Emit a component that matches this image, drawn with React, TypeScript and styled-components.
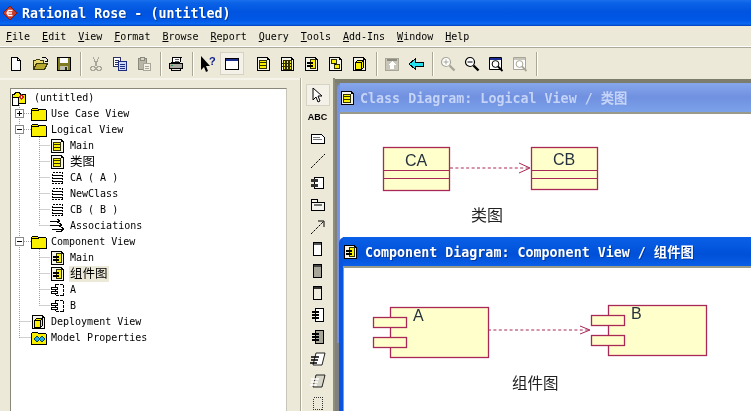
import React from "react"
import styled, { createGlobalStyle } from "styled-components"

const GlobalStyle = createGlobalStyle`
  html, body {
    margin: 0;
    padding: 0;
    background: #ece9d8;
    overflow: hidden;
  }
`

const MONO = `"DejaVu Sans Mono", "Noto Sans CJK SC", monospace`

const Frame = styled.div`
  width: 751px;
  height: 411px;
  overflow: hidden;
  display: flex;
  flex-direction: column;
  background: #ece9d8;
  font-family: ${MONO};
  color: #000;
  filter: blur(0.35px);
`

const TitleBar = styled.div`
  height: 26px;
  flex: none;
  display: flex;
  align-items: center;
  gap: 4px;
  padding-left: 2px;
  background: linear-gradient(#1a70ee 0, #0a62e6 3px, #0054e0 12px, #0058e6 20px, #0a68f2 24px, #0040b8 26px);
  color: #fff;
  font-weight: bold;
  font-size: 13.33px;
  white-space: pre;
  text-shadow: 1px 1px 0 #003c9c;
`

const MenuBar = styled.div`
  height: 20px;
  flex: none;
  display: flex;
  align-items: center;
  font-size: 10px;
  border-bottom: 1px solid #fff;
  box-shadow: 0 1px 0 #aca899;
`

const MenuItem = styled.div`
  padding: 0 6px;
  white-space: pre;
`

const ToolBar = styled.div`
  height: 30px;
  flex: none;
  display: flex;
  align-items: center;
  padding: 1px 0 0 4px;
  box-sizing: border-box;
  margin-top: 1px;
`

const ToolButton = styled.div<{ $active?: boolean }>`
  width: 24px;
  height: 23px;
  flex: none;
  display: flex;
  align-items: center;
  justify-content: center;
  box-sizing: border-box;
  ${(p) => (p.$active ? "background: #f4f2e8; border: 1px solid #d6d3c4;" : "")}
`

const ToolSeparator = styled.div<{ $blank?: boolean }>`
  width: 8px;
  height: 24px;
  flex: none;
  display: flex;
  justify-content: center;
  &::after {
    content: "";
    width: 1px;
    background: ${(p) => (p.$blank ? "transparent" : "#aca899")};
    box-shadow: ${(p) => (p.$blank ? "none" : "1px 0 0 #fff")};
  }
`

const Workspace = styled.div`
  flex: 1;
  min-height: 0;
  display: flex;
`

const TreeDock = styled.div`
  width: 301px;
  flex: none;
  box-sizing: border-box;
  padding: 10px 13px 0 10px;
  border-right: 1px solid #aca899;
  box-shadow: inset 0 2px 0 #f6f4ea;
`

const TreePanel = styled.div`
  position: relative;
  height: 100%;
  box-sizing: border-box;
  background: #fff;
  border-top: 1px solid #8a8878;
  border-left: 1px solid #8a8878;
  border-right: 1px solid #c8c6b8;
  padding-top: 1px;
`

const TreeGuides = styled.svg`
  position: absolute;
  left: -11px;
  top: -12px;
`

const TreeRow = styled.div<{ $level: number }>`
  position: relative;
  height: 16px;
  display: flex;
  align-items: center;
  padding-left: ${(p) => [0, 20, 39][p.$level]}px;
  font-size: 10px;
  white-space: pre;
`

const TreeIcon = styled.span<{ $gap: number }>`
  width: 16px;
  height: 16px;
  flex: none;
  display: flex;
  margin-right: ${(p) => p.$gap}px;
`

const TreeLabel = styled.span<{ $selected?: boolean; $cjk?: boolean }>`
  padding: 0 1px;
  line-height: 16px;
  font-size: ${(p) => (p.$cjk ? "12.5px" : "10px")};
  background: ${(p) => (p.$selected ? "#ece9d8" : "transparent")};
`

const Expander = styled.span`
  position: absolute;
  left: 4px;
  top: 3px;
  width: 9px;
  height: 9px;
  box-sizing: border-box;
  border: 1px solid #8a8a8a;
  background: #fff;
  display: flex;
  align-items: center;
  justify-content: center;
`

const SideToolBar = styled.div`
  width: 34px;
  flex: none;
  display: flex;
  flex-direction: column;
  align-items: center;
  padding-top: 6px;
  box-sizing: border-box;
  border-left: 1px solid #fff;
  border-right: 2px solid #8f8d7c;
`

const SideButton = styled.div<{ $active?: boolean }>`
  width: 24px;
  height: 22px;
  flex: none;
  display: flex;
  align-items: center;
  justify-content: center;
  box-sizing: border-box;
  font-size: 9px;
  font-weight: bold;
  font-family: "Liberation Sans", sans-serif;
  ${(p) => (p.$active ? "background: #f4f2e8; border: 1px solid #d6d3c4;" : "")}
`

const MdiArea = styled.div`
  flex: 1;
  position: relative;
  background: linear-gradient(#ece9d8 0, #ece9d8 1px, #7d7d6e 1px, #7d7d6e 5px, #808080 5px);
  overflow: hidden;
`

const DocWindow = styled.div<{ $active?: boolean; $left: number; $top: number; $height: number }>`
  position: absolute;
  left: ${(p) => p.$left}px;
  top: ${(p) => p.$top}px;
  width: 460px;
  height: ${(p) => p.$height}px;
  display: flex;
  flex-direction: column;
  box-sizing: border-box;
  padding: 0 ${(p) => (p.$active ? 4 : 2)}px 0;
  border-radius: 6px 6px 0 0;
  background: ${(p) => (p.$active ? "#0a55e0" : "#7394e4")};
`

const DocTitle = styled.div<{ $active?: boolean }>`
  height: 29px;
  flex: none;
  display: flex;
  align-items: center;
  gap: ${(p) => (p.$active ? 6 : 4)}px;
  margin-left: ${(p) => (p.$active ? 0 : 1)}px;
  font-size: 13.33px;
  font-weight: bold;
  white-space: pre;
  color: ${(p) => (p.$active ? "#fff" : "#c4d3f6")};
  ${(p) =>
    p.$active
      ? "text-shadow: 1px 1px 0 #0038a0; background: linear-gradient(#0a60e8, #0050d8 60%, #0a5ee8);"
      : "background: linear-gradient(#86a6ec, #7090e0 50%, #7ca2ea);"}
`

const DocClient = styled.div`
  flex: 1;
  background: #fff;
  border-top: 2px solid #9a9a8a;
  border-left: 1px solid #9a9a8a;
`

const DiagramSvg = styled.svg`
  display: block;
`

const DiagramText = styled.text<{ $size: number; $dark?: boolean }>`
  font-family: "Liberation Sans", "Noto Sans CJK SC", sans-serif;
  font-size: ${(p) => p.$size}px;
  fill: ${(p) => (p.$dark ? "#222" : "#26323e")};
`

type IconProps = { gray?: boolean }

const Svg: React.FC<{ children: React.ReactNode; size?: number }> = ({ children, size = 16 }) => (
  <svg width={size} height={size} viewBox="0 0 16 16" fill="none" shapeRendering="crispEdges">
    {children}
  </svg>
)

const NewIcon = () => (
  <Svg>
    <path d="M3.5 1.5h6l3 3v10h-9z" fill="#fff" stroke="#000" />
    <path d="M9.5 1.5v3h3" stroke="#000" />
  </Svg>
)
const OpenIcon = () => (
  <Svg>
    <path d="M1.5 13.5v-9h2l1-1h3l1 1h3v2" fill="#e8d870" stroke="#3a3a10" />
    <path d="M1.5 13.5l3-6h11l-3 6z" fill="#b8a830" stroke="#3a3a10" />
    <path d="M10 1.5l3-.5 2 2M15 3v2h-2" stroke="#000" />
  </Svg>
)
const SaveIcon = () => (
  <Svg>
    <path d="M1.5 1.5h13v13h-13z" fill="#807a20" stroke="#000" />
    <path d="M4 2h8v5H4z" fill="#fff" />
    <path d="M4 10h8v4H4z" fill="#c0c0b0" />
    <path d="M9 11h2v3H9z" fill="#303020" />
  </Svg>
)
const CutIcon = () => (
  <Svg>
    <path d="M5 1l4 9M11 1L7 10" stroke="#a8a698" />
    <circle cx="5" cy="12.5" r="2.2" stroke="#a8a698" />
    <circle cx="11" cy="12.5" r="2.2" stroke="#a8a698" />
  </Svg>
)
const CopyIcon = () => (
  <Svg>
    <path d="M1.5 1.5h7v9h-7z" fill="#fff" stroke="#303060" />
    <path d="M3 4h4M3 6h4M3 8h3" stroke="#303060" />
    <path d="M6.5 5.5h8v9h-8z" fill="#d0d8f8" stroke="#1c2c80" />
    <path d="M8 8h5M8 10h5M8 12h5" stroke="#1c2c80" />
  </Svg>
)
const PasteIcon = () => (
  <Svg>
    <path d="M2.5 2.5h8v11h-8z" fill="#b8b6a6" stroke="#8c8a7c" />
    <path d="M4.5 1.5h4v3h-4z" fill="#d8d6c8" stroke="#8c8a7c" />
    <path d="M7.5 7.5h7v7h-7z" fill="#f4f2e8" stroke="#a8a698" />
    <path d="M9 10h4M9 12h4" stroke="#a8a698" />
  </Svg>
)
const PrintIcon = () => (
  <Svg>
    <path d="M5 1.5h8l-1 5H4z" fill="#fff" stroke="#000" />
    <path d="M1.5 7.5h13v5h-13z" fill="#a8a8a0" stroke="#000" />
    <path d="M3.5 12.5h9v2h-9z" fill="#e8e8e0" stroke="#000" />
    <path d="M3 9h2" stroke="#20a040" />
    <path d="M7 5h4M7 3h4" stroke="#606060" />
  </Svg>
)
const HelpIcon = () => (
  <svg width="16" height="16" viewBox="0 0 16 16">
    <path d="M1 0v14l3-3 2 5 2-1-2-5h4z" fill="#000" />
    <text x="9" y="9" fontSize="11" fontWeight="bold" fontFamily="Liberation Sans, sans-serif" fill="#0c1c90">?</text>
  </svg>
)
const BrowseIcon = () => (
  <Svg>
    <path d="M1.5 2.5h13v11h-13z" fill="#fff" stroke="#000" />
    <path d="M2 3h12v2H2z" fill="#1c2c90" />
  </Svg>
)
const DiagramPage: React.FC<{ children: React.ReactNode }> = ({ children }) => (
  <Svg>
    <path d="M1.5 1.5h10l2 2v11h-12z" fill="#f4f4ea" stroke="#000" />
    <path d="M11.5 1.5v2h2" stroke="#000" />
    {children}
  </Svg>
)
const ClassDiagramIcon = () => (
  <DiagramPage>
    <path d="M4 4h6v9H4z" fill="#f8f000" />
    <path d="M4 6.5h6M4 9.5h6M4 4.5h6M4 12.5h6" stroke="#303000" />
    <path d="M3.5 4v9M10.5 4v9" stroke="#303000" />
  </DiagramPage>
)
const UseCaseDiagramIcon = () => (
  <DiagramPage>
    <path d="M3 4h2v9H3zM6 4h2v9H6zM9 4h2v9H9z" fill="#f8f000" stroke="#303000" />
    <path d="M2 7h10M2 10h10" stroke="#303000" />
  </DiagramPage>
)
const ComponentDiagramIcon = () => (
  <DiagramPage>
    <path d="M6 3.5h5v9H6z" fill="#f8f000" stroke="#303000" />
    <path d="M3 6h5v1.6H3zM3 9h5v1.6H3z" fill="#f8f000" stroke="#000" />
  </DiagramPage>
)
const DeploymentDiagramIcon = () => (
  <DiagramPage>
    <path d="M3.5 6.5l2-2h6v7l-2 2h-6z" fill="#f8f000" stroke="#000" />
    <path d="M3.5 6.5h6v7M9.5 6.5l2-2" stroke="#000" />
  </DiagramPage>
)
const StateDiagramIcon = () => (
  <DiagramPage>
    <path d="M3 3.5h5v4H3z" fill="#f8f000" stroke="#303000" />
    <path d="M6.5 8.5h5v4h-5z" fill="#f8f000" stroke="#303000" />
    <path d="M6 7.5l2 1" stroke="#000" />
  </DiagramPage>
)
const UpIcon: React.FC<IconProps> = () => (
  <Svg>
    <path d="M1.5 2.5h13v12h-13z" fill="#c8c6b8" stroke="#a8a698" />
    <path d="M3 4h10" stroke="#8c8a7c" strokeWidth="2" />
    <path d="M8 5l4 4h-2v4H6V9H4z" fill="#fff" />
  </Svg>
)
const BackIcon = () => (
  <Svg>
    <path d="M1 8l6-5v3h8v4H7v3z" fill="#22e0f0" stroke="#000" />
  </Svg>
)
const ZoomIcon: React.FC<{ plus?: boolean; gray?: boolean }> = ({ plus, gray }) => {
  const c = gray ? "#a8a698" : "#000"
  return (
    <svg width="16" height="16" viewBox="0 0 16 16" fill="none">
      <circle cx="6" cy="6" r="4.5" fill="#fff" stroke={c} strokeWidth="1.2" />
      <path d="M3.5 6h5" stroke={c} />
      {plus && <path d="M6 3.5v5" stroke={c} />}
      <path d="M9.5 9.5l5 5" stroke={c} strokeWidth="2.4" />
    </svg>
  )
}
const FitIcon: React.FC<IconProps> = ({ gray }) => {
  const c = gray ? "#a8a698" : "#000"
  return (
    <svg width="16" height="16" viewBox="0 0 16 16" fill="none">
      <path d="M1.5 1.5h12v12h-12z" fill="#fff" stroke={c} />
      <path d="M2 2h11v2H2z" fill={gray ? "#c8c6b8" : "#1c2c90"} />
      <circle cx="7.5" cy="8" r="3.4" stroke={c} />
      <path d="M10 10.5l4.5 4.5" stroke={c} strokeWidth="1.8" />
    </svg>
  )
}

const RootIcon = () => (
  <Svg>
    <path d="M3.5 4.5l1-2h4l1 2h5v9h-13v-9z" fill="#f8f000" stroke="#000" />
    <path d="M1 7h6v8H1z" fill="#fff" stroke="#000" />
    <path d="M10 4l3 3-3 3-3-3z" fill="#d02020" />
    <path d="M10 6h1v2h-1z" fill="#fff" />
  </Svg>
)
const FolderIcon = () => (
  <Svg>
    <path d="M.5 14.5v-11l1-1h5l1 1h7l1 1v10z" fill="#f8f000" stroke="#000" />
    <path d="M.5 4.5h7" stroke="#000" />
  </Svg>
)
const ModelPropsIcon = () => (
  <Svg>
    <path d="M.5 14.5v-11l1-1h5l1 1h7l1 1v10z" fill="#f8f000" stroke="#000" />
    <path d="M6 6l3 3-3 3-3-3zM11 6l3 3-3 3-3-3z" fill="#20b0e0" stroke="#004060" />
  </Svg>
)
const TreeClassIcon = () => (
  <Svg>
    <path d="M2.5 2.5h10v11h-10z" fill="#fff" stroke="#000" strokeDasharray="2 1" />
    <path d="M3 5h9M3 8h9M3 11h9" stroke="#000" />
  </Svg>
)
const AssocIcon = () => (
  <Svg>
    <path d="M0 3h9M0 7h11M2 11h11" stroke="#000" />
    <path d="M7 1l3 2-3 2M9 5l3 2-3 2M11 9l3 2-3 2" stroke="#000" />
    <path d="M6 13h6" stroke="#000" />
  </Svg>
)
const TreeComponentIcon = () => (
  <Svg>
    <path d="M5.5 2.5h8v11h-8z" fill="#fff" stroke="#000" strokeDasharray="3 1" />
    <path d="M1.5 5.5h6v2h-6zM1.5 9.5h6v2h-6z" fill="#fff" stroke="#000" />
  </Svg>
)

const CursorIcon = () => (
  <svg width="16" height="16" viewBox="0 0 16 16">
    <path d="M3 1v12l3-3 2 5 2-1-2-5h4z" fill="#fff" stroke="#000" />
  </svg>
)
const NoteIcon = () => (
  <Svg>
    <path d="M1.5 3.5h10l3 3v6h-13z" fill="#fff" stroke="#000" strokeWidth="1" />
    <path d="M3 6h7M3 8h9" stroke="#777" />
  </Svg>
)
const DashLineIcon = () => (
  <svg width="16" height="16" viewBox="0 0 16 16">
    <path d="M1 15L15 1" stroke="#000" strokeWidth="1" strokeDasharray="2.4 1.2" />
  </svg>
)
const PaletteComponentIcon = () => (
  <Svg>
    <path d="M4.5 2.5h9v11h-9z" fill="#fff" stroke="#000" />
    <path d="M1 4h7v3H1zM1 9h7v3H1z" fill="#333" />
  </Svg>
)
const PackageIcon = () => (
  <Svg>
    <path d="M1.5 5.5h13v8h-13zM1.5 2.5h6v3h-6z" fill="#f6f6ee" stroke="#000" />
    <path d="M4 8h8" stroke="#777" strokeWidth="2" />
  </Svg>
)
const DashArrowIcon = () => (
  <svg width="16" height="16" viewBox="0 0 16 16" fill="none">
    <path d="M1 15L13 3" stroke="#000" strokeDasharray="2.4 1.2" />
    <path d="M8 2h6v6" stroke="#000" />
  </svg>
)
const TallBoxIcon: React.FC<{ fill?: string; head?: string }> = ({ fill = "#fff", head = "#555" }) => (
  <Svg>
    <path d="M3.5 1.5h8v13h-8z" fill={fill} stroke="#000" />
    <path d="M4 2h7v2H4z" fill={head} />
  </Svg>
)
const ComponentNarrowIcon: React.FC<{ fill?: string }> = ({ fill = "#fff" }) => (
  <Svg>
    <path d="M5.5 1.5h8v13h-8z" fill={fill} stroke="#000" />
    <path d="M2 4h7v1.6H2zM2 7h7v1.6H2zM2 10h7v1.6H2z" fill="#000" />
  </Svg>
)
const SlantIcon: React.FC<{ fill?: string; ink?: string }> = ({ fill = "#fff", ink = "#000" }) => (
  <svg width="16" height="16" viewBox="0 0 16 16">
    <path d="M6 2h9l-3 12H3z" fill={fill} stroke="#222" />
    <path d="M1 6h8M1 9h7M0 12h7" stroke={ink} strokeWidth="1.6" />
  </svg>
)
const DottedBoxIcon = () => (
  <Svg>
    <path d="M3.5 2.5h9v12h-9z" stroke="#333" strokeDasharray="1 1" />
  </Svg>
)

const DIAGRAM_STROKE = "#a82858"
const NODE_FILL = "#ffffcc"

const ClassDiagram = () => (
  <DiagramSvg width="411" height="120" viewBox="340 114 411 120">
    <g fill={NODE_FILL} stroke={DIAGRAM_STROKE} strokeWidth="1.3">
      <rect x="383.5" y="147.5" width="66" height="43" />
      <rect x="531.5" y="147.5" width="66" height="42" />
    </g>
    <path d="M384 170.5h66M384 178.5h66M532 170.5h65M532 178.5h65" stroke={DIAGRAM_STROKE} strokeWidth="1.2" />
    <path d="M450 168h80" stroke={DIAGRAM_STROKE} strokeWidth="1.2" strokeDasharray="3 2.4" />
    <path d="M519 163l11 5-11 5" stroke={DIAGRAM_STROKE} fill="none" />
    <DiagramText x="405" y="166" $size={16}>CA</DiagramText>
    <DiagramText x="553" y="165" $size={16}>CB</DiagramText>
    <DiagramText x="471" y="221" $size={16} $dark>类图</DiagramText>
  </DiagramSvg>
)

const ComponentDiagram = () => (
  <DiagramSvg width="411" height="144" viewBox="344 267 411 144">
    <g fill={NODE_FILL} stroke={DIAGRAM_STROKE} strokeWidth="1.3">
      <rect x="390.5" y="306.5" width="98" height="50" />
      <rect x="373.5" y="316.5" width="33" height="10" />
      <rect x="373.5" y="336.5" width="33" height="10" />
      <rect x="608.5" y="304.5" width="98" height="50" />
      <rect x="591.5" y="314.5" width="33" height="10" />
      <rect x="591.5" y="334.5" width="33" height="10" />
    </g>
    <path d="M488 329h102" stroke={DIAGRAM_STROKE} strokeWidth="1.2" strokeDasharray="3 2.4" />
    <path d="M580 325l10 4-10 4" stroke={DIAGRAM_STROKE} fill="none" />
    <DiagramText x="413" y="320" $size={16}>A</DiagramText>
    <DiagramText x="631" y="318" $size={16}>B</DiagramText>
    <DiagramText x="512" y="388" $size={15.5} $dark>组件图</DiagramText>
  </DiagramSvg>
)

const menus = ["File", "Edit", "View", "Format", "Browse", "Report", "Query", "Tools", "Add-Ins", "Window", "Help"]

const treeRows: { level: number; icon: React.ReactNode; label: string; cjk?: boolean; selected?: boolean; expander?: "+" | "-" }[] = [
  { level: 0, icon: <RootIcon />, label: "(untitled)" },
  { level: 1, icon: <FolderIcon />, label: "Use Case View", expander: "+" },
  { level: 1, icon: <FolderIcon />, label: "Logical View", expander: "-" },
  { level: 2, icon: <ClassDiagramIcon />, label: "Main" },
  { level: 2, icon: <ClassDiagramIcon />, label: "类图", cjk: true },
  { level: 2, icon: <TreeClassIcon />, label: "CA ( A )" },
  { level: 2, icon: <TreeClassIcon />, label: "NewClass" },
  { level: 2, icon: <TreeClassIcon />, label: "CB ( B )" },
  { level: 2, icon: <AssocIcon />, label: "Associations" },
  { level: 1, icon: <FolderIcon />, label: "Component View", expander: "-" },
  { level: 2, icon: <ComponentDiagramIcon />, label: "Main" },
  { level: 2, icon: <ComponentDiagramIcon />, label: "组件图", cjk: true, selected: true },
  { level: 2, icon: <TreeComponentIcon />, label: "A" },
  { level: 2, icon: <TreeComponentIcon />, label: "B" },
  { level: 1, icon: <DeploymentDiagramIcon />, label: "Deployment View" },
  { level: 1, icon: <ModelPropsIcon />, label: "Model Properties" },
]

const sideTools: React.ReactNode[] = [
  <CursorIcon />,
  "ABC",
  <NoteIcon />,
  <DashLineIcon />,
  <PaletteComponentIcon />,
  <PackageIcon />,
  <DashArrowIcon />,
  <TallBoxIcon />,
  <TallBoxIcon fill="#a8a698" head="#444" />,
  <TallBoxIcon fill="#f0eee0" head="#333" />,
  <ComponentNarrowIcon />,
  <ComponentNarrowIcon fill="#a8a698" />,
  <SlantIcon />,
  <SlantIcon fill="#d8d6c8" ink="#fff" />,
  <DottedBoxIcon />,
]

const App: React.FC = () => {
  return (
    <Frame>
      <GlobalStyle />
      <TitleBar>
        <svg width="16" height="16" viewBox="0 0 16 16">
          <path d="M8 1l7 7-7 7-7-7z" fill="#c83a2a" stroke="#7a1c14" />
          <path d="M10.5 5.5h-4L5 8l1.5 2.5h4M6 8h4" stroke="#fff" strokeWidth="1.3" fill="none" />
        </svg>
        Rational Rose - (untitled)
      </TitleBar>
      <MenuBar>
        {menus.map((m) => (
          <MenuItem key={m}>
            <u>{m[0]}</u>
            {m.slice(1)}
          </MenuItem>
        ))}
      </MenuBar>
      <ToolBar>
        <ToolButton><NewIcon /></ToolButton>
        <ToolButton><OpenIcon /></ToolButton>
        <ToolButton><SaveIcon /></ToolButton>
        <ToolSeparator />
        <ToolButton><CutIcon /></ToolButton>
        <ToolButton><CopyIcon /></ToolButton>
        <ToolButton><PasteIcon /></ToolButton>
        <ToolSeparator />
        <ToolButton><PrintIcon /></ToolButton>
        <ToolSeparator />
        <ToolButton><HelpIcon /></ToolButton>
        <ToolButton $active><BrowseIcon /></ToolButton>
        <ToolSeparator $blank />
        <ToolButton><ClassDiagramIcon /></ToolButton>
        <ToolButton><UseCaseDiagramIcon /></ToolButton>
        <ToolButton><ComponentDiagramIcon /></ToolButton>
        <ToolButton><StateDiagramIcon /></ToolButton>
        <ToolButton><DeploymentDiagramIcon /></ToolButton>
        <ToolSeparator />
        <ToolButton><UpIcon /></ToolButton>
        <ToolButton><BackIcon /></ToolButton>
        <ToolSeparator />
        <ToolButton><ZoomIcon plus gray /></ToolButton>
        <ToolButton><ZoomIcon /></ToolButton>
        <ToolButton><FitIcon /></ToolButton>
        <ToolButton><FitIcon gray /></ToolButton>
        <ToolSeparator />
      </ToolBar>
      <Workspace>
        <TreeDock>
          <TreePanel>
            <TreeGuides width="120" height="270" viewBox="0 0 120 270" fill="none">
              <g stroke="#a0a0a0" strokeDasharray="1 1">
                <path d="M19.5 28V261M24 36.5H31M24 52.5H31M24 164.5H31M19.5 244.5H31M19.5 260.5H31" />
                <path d="M39.5 60V148.5M39.5 172V228.5" />
                <path d="M39.5 68.5H50M39.5 84.5H50M39.5 100.5H50M39.5 116.5H50M39.5 132.5H50M39.5 148.5H50" />
                <path d="M39.5 180.5H50M39.5 196.5H50M39.5 212.5H50M39.5 228.5H50" />
              </g>
            </TreeGuides>
            {treeRows.map((row, i) => (
              <TreeRow key={i} $level={row.level}>
                {row.expander && (
                  <Expander>
                    <svg width="7" height="7" viewBox="0 0 7 7" shapeRendering="crispEdges">
                      <path d={row.expander === "+" ? "M1 3.5h5M3.5 1v5" : "M1 3.5h5"} stroke="#000" />
                    </svg>
                  </Expander>
                )}
                <TreeIcon $gap={row.level === 0 ? 6 : 3}>{row.icon}</TreeIcon>
                <TreeLabel $cjk={row.cjk} $selected={row.selected}>{row.label}</TreeLabel>
              </TreeRow>
            ))}
          </TreePanel>
        </TreeDock>
        <SideToolBar>
          {sideTools.map((tool, i) => (
            <SideButton key={i} $active={i === 0}>{tool}</SideButton>
          ))}
        </SideToolBar>
        <MdiArea>
          <DocWindow $left={2} $top={5} $height={260}>
            <DocTitle>
              <ClassDiagramIcon />
              Class Diagram: Logical View / 类图
            </DocTitle>
            <DocClient>
              <ClassDiagram />
            </DocClient>
          </DocWindow>
          <DocWindow $active $left={4} $top={159} $height={200}>
            <DocTitle $active>
              <ComponentDiagramIcon />
              Component Diagram: Component View / 组件图
            </DocTitle>
            <DocClient>
              <ComponentDiagram />
            </DocClient>
          </DocWindow>
        </MdiArea>
      </Workspace>
    </Frame>
  )
}

export default App
